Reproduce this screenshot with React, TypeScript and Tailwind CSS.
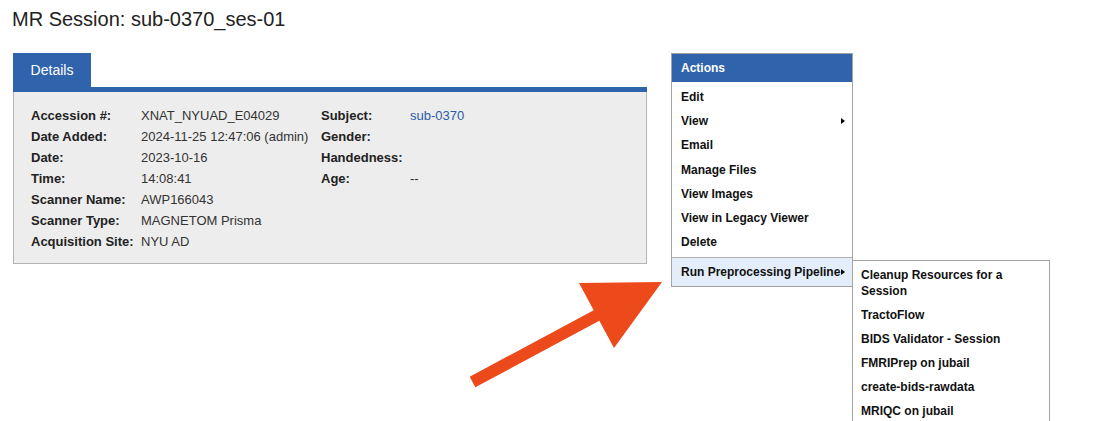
const details: [string, string][] = [
  ['Accession #:', 'XNAT_NYUAD_E04029'],
  ['Date Added:', '2024-11-25 12:47:06 (admin)'],
  ['Date:', '2023-10-16'],
  ['Time:', '14:08:41'],
  ['Scanner Name:', 'AWP166043'],
  ['Scanner Type:', 'MAGNETOM Prisma'],
  ['Acquisition Site:', 'NYU AD'],
];

const subjectInfo: [string, string][] = [
  ['Subject:', 'sub-0370'],
  ['Gender:', ''],
  ['Handedness:', ''],
  ['Age:', '--'],
];

const actions = ['Edit', 'View', 'Email', 'Manage Files', 'View Images', 'View in Legacy Viewer', 'Delete'];

const pipelines = [
  'Cleanup Resources for a Session',
  'TractoFlow',
  'BIDS Validator - Session',
  'FMRIPrep on jubail',
  'create-bids-rawdata',
  'MRIQC on jubail',
];

function Caret() {
  return (
    <span className="absolute right-[7px] top-1/2 -translate-y-1/2 w-0 h-0 border-y-[3.5px] border-y-transparent border-l-[4px] border-l-black" />
  );
}

function DetailsPanel() {
  return (
    <div className="w-[634px]">
      <div className="w-[78px] h-[34px] bg-[#2f64ad] text-white text-[14px] flex items-center justify-center">
        Details
      </div>
      <div className="h-[5px] bg-[#2f64ad]" />
      <div className="bg-[#ededed] border border-t-0 border-[#b3b3b3] pl-[17px] pt-[13px] pb-[11px] h-[172px] flex">
        <div className="grid grid-cols-[110px_180px] content-start leading-[21px] text-[13px]">
          {details.map(([label, value]) => (
            <div key={label} className="contents">
              <span className="font-bold text-[#222]">{label}</span>
              <span className="text-[#333]">{value}</span>
            </div>
          ))}
        </div>
        <div className="grid grid-cols-[89px_120px] content-start leading-[21px] text-[13px]">
          {subjectInfo.map(([label, value]) => (
            <div key={label} className="contents">
              <span className="font-bold text-[#222]">{label}</span>
              {label === 'Subject:' ? (
                <span className="text-[#2a5ba6]">{value}</span>
              ) : (
                <span className="text-[#333] h-[21px]">{value}</span>
              )}
            </div>
          ))}
        </div>
      </div>
    </div>
  );
}

function ActionsMenu() {
  return (
    <div className="w-[182px] border border-[#a3a3a3] bg-white text-[12px] font-bold text-[#111]">
      <div className="h-[28px] bg-[#2f64ad] text-white pl-[9px] flex items-center">Actions</div>
      <div className="pt-[3px] pb-[3px]">
        {actions.map((a) => (
          <div key={a} className="relative h-[24.2px] leading-[24.2px] pl-[9px]">
            {a}
            {a === 'View' && <Caret />}
          </div>
        ))}
      </div>
      <div className="relative border-t border-[#b0b0b0] bg-[#e4eefa] h-[29px] leading-[28px] pl-[9px]">
        Run Preprocessing Pipeline
        <Caret />
        <div className="absolute left-full top-[2px] w-[198px] border border-[#a3a3a3] bg-white pt-[2px] pb-[40px] z-10">
          {pipelines.map((p) => (
            <div key={p} className="py-[4px] pl-[8px] pr-[8px] leading-[16px]">
              {p}
            </div>
          ))}
        </div>
      </div>
    </div>
  );
}

export default function App() {
  return (
    <div
      className="relative w-[1099px] h-[421px] overflow-hidden bg-white"
      style={{ fontFamily: '"Liberation Sans", Arial, sans-serif' }}
    >
      <h1 className="pl-[12px] pt-[7px] text-[20px] leading-[24px] text-[#222]">MR Session: sub-0370_ses-01</h1>
      <div className="flex items-start gap-[24px] pl-[13px] mt-[22px]">
        <DetailsPanel />
        <ActionsMenu />
      </div>
      <svg className="absolute left-0 top-0 pointer-events-none" width="1099" height="421" viewBox="0 0 1099 421">
        <polygon
          points="469.7,376.7 593.7,310.2 579,283 662,282 614,348 599.3,320.8 475.3,387.3"
          fill="#ec4a1b"
        />
      </svg>
    </div>
  );
}
